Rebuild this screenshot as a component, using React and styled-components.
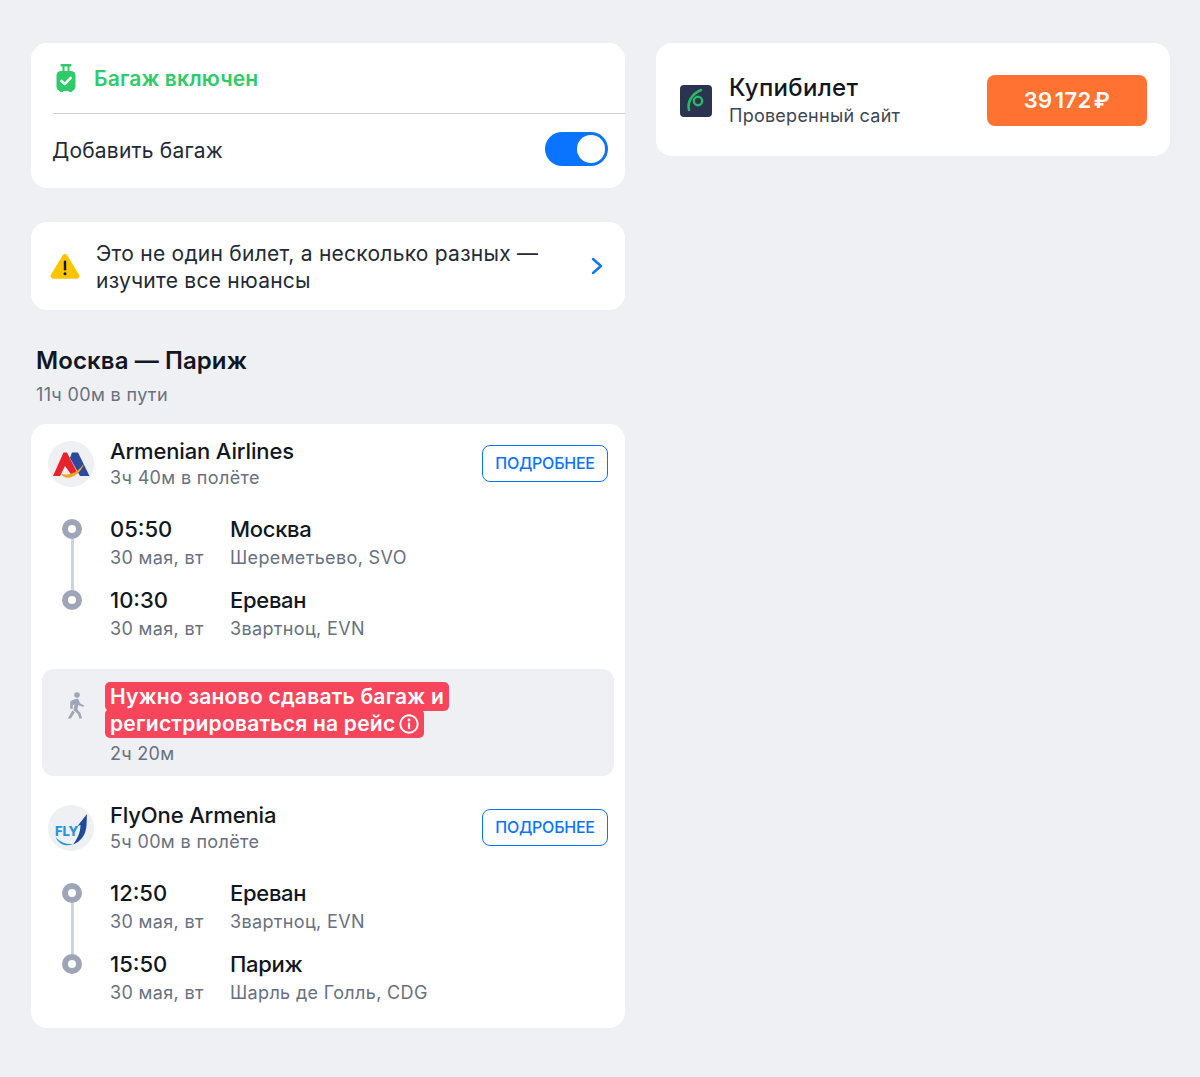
import React from 'react';
import styled, { createGlobalStyle } from 'styled-components';

const GlobalStyle = createGlobalStyle`
  html, body { margin: 0; padding: 0; }
  body {
    background: #eef0f4;
    font-family: Inter, "Noto Sans", sans-serif;
    color: #11171f;
  }
  * { box-sizing: border-box; }
`;

const Page = styled.div`
  display: grid;
  grid-template-columns: 594px 514px;
  column-gap: 31px;
  align-items: start;
  width: 1200px;
  height: 1077px;
  padding: 43px 0 0 31px;
`;

const Column = styled.div`
  display: flex;
  flex-direction: column;
`;

const Card = styled.section`
  background: #fff;
  border-radius: 16px;
`;

const BaggageCard = styled(Card)`
  height: 145px;
`;

const BaggageHead = styled.div`
  display: flex;
  align-items: center;
  gap: 17px;
  height: 71px;
  margin-left: 22px;
  padding: 0 0 0 2px;
  border-bottom: 1px solid #ccd3e2;
  color: #2ecb68;
  font-size: 21px;
  font-weight: 600;
  letter-spacing: 0.15px;
`;

const BaggageRow = styled.div`
  display: flex;
  align-items: center;
  justify-content: space-between;
  height: 73px;
  padding: 0 17px 0 21px;
  font-size: 21px;
  letter-spacing: 0.2px;
  color: #232a35;
`;

const Toggle = styled.div`
  display: flex;
  align-items: center;
  justify-content: flex-end;
  width: 63px;
  height: 34px;
  margin-top: -4px;
  padding: 3px;
  border-radius: 17px;
  background: #0a74ff;
`;

const Knob = styled.div`
  width: 28px;
  height: 28px;
  border-radius: 50%;
  background: #fff;
`;

const NoticeCard = styled(Card)`
  display: flex;
  align-items: center;
  height: 88px;
  margin-top: 34px;
  padding: 0 22px 0 19px;
`;

const NoticeText = styled.div`
  flex: 1;
  margin-left: 16px;
  padding-top: 2px;
  font-size: 21px;
  line-height: 27px;
  letter-spacing: 0.25px;
  color: #232a35;
`;

const RouteTitle = styled.h2`
  margin: 34px 0 0 5px;
  font-size: 24px;
  line-height: 34px;
  font-weight: 600;
  letter-spacing: 0.1px;
`;

const RouteTime = styled.div`
  margin: 5px 0 17px 5px;
  font-size: 18px;
  line-height: 24px;
  letter-spacing: 0.35px;
  color: #677180;
`;

const RouteCard = styled(Card)`
  padding: 17px 11px 24px;
  height: 604px;
`;

const Segment = styled.div`
  padding: 0 6px;
`;

const SegmentHead = styled.div`
  display: flex;
  align-items: center;
  height: 46px;
`;

const Avatar = styled.div`
  flex: none;
  width: 46px;
  height: 46px;
  border-radius: 50%;
  background: #eef0f4;

  svg { display: block; }
`;

const CarrierText = styled.div`
  flex: 1;
  margin-left: 16px;
`;

const CarrierName = styled.div`
  font-size: 22px;
  line-height: 24px;
  font-weight: 500;
  letter-spacing: -0.15px;
`;

const CarrierTime = styled.div`
  margin-top: 3px;
  font-size: 18px;
  line-height: 24px;
  letter-spacing: 0.35px;
  color: #677180;
`;

const MoreButton = styled.button`
  width: 126px;
  height: 37px;
  margin-top: -2px;
  padding: 0;
  background: #fff;
  border: 1px solid #0a74ff;
  border-radius: 8px;
  color: #0a74ff;
  font-family: inherit;
  font-size: 16px;
  font-weight: 500;
  letter-spacing: -0.25px;
`;

const Stops = styled.div`
  margin-top: 30px;
`;

const Stop = styled.div`
  position: relative;
  display: grid;
  grid-template-columns: 120px 1fr;
  height: ${p => (p.$last ? 52 : 71)}px;
  padding-left: 62px;

  &::before {
    content: '';
    position: absolute;
    left: 14px;
    top: 2px;
    box-sizing: border-box;
    width: 20px;
    height: 20px;
    border: 6px solid #9da5b6;
    border-radius: 50%;
    background: #fff;
  }

  ${p => !p.$last && `
    &::after {
      content: '';
      position: absolute;
      left: 22.5px;
      top: 22px;
      width: 3px;
      height: 51px;
      background: #ccd3e2;
    }
  `}
`;

const Main = styled.div`
  font-size: 22px;
  line-height: 24px;
  font-weight: 500;
`;

const City = styled(Main)`
  letter-spacing: -0.3px;
`;

const Sub = styled.div`
  margin-top: 5px;
  font-size: 18px;
  line-height: 24px;
  letter-spacing: 0.35px;
  color: #677180;
`;

const Transfer = styled.div`
  display: flex;
  height: 107px;
  margin: 29px 0;
  padding: 14px 12px 0 24px;
  background: #eef0f4;
  border-radius: 12px;
`;

const WalkIcon = styled.div`
  flex: none;
  width: 44px;
  padding: 9px 0 0 1px;
`;

const TransferBody = styled.div`
  font-size: 21px;
  line-height: 27px;
  font-weight: 600;
  letter-spacing: 0.23px;
`;

const Mark = styled.span`
  margin-left: -5px;
  padding: 2px 5px;
  background: #f7465c;
  color: #fff;
  border-radius: 5px;
  -webkit-box-decoration-break: clone;
  box-decoration-break: clone;

  svg { vertical-align: -3px; margin-left: 4px; }
`;

const TransferTime = styled.div`
  margin-top: 5px;
  font-size: 18px;
  line-height: 24px;
  font-weight: 400;
  letter-spacing: 0.3px;
  color: #677180;
`;

const SiteCard = styled(Card)`
  display: flex;
  align-items: center;
  height: 113px;
  padding: 2px 23px 0 24px;
`;

const SiteText = styled.div`
  flex: 1;
  margin-left: 17px;
`;

const SiteName = styled.div`
  font-size: 24px;
  line-height: 28px;
  font-weight: 500;
  letter-spacing: 0.3px;
`;

const SiteNote = styled.div`
  margin-top: 2px;
  font-size: 18px;
  line-height: 24px;
  letter-spacing: 0.25px;
  color: #3e4653;
`;

const BuyButton = styled.button`
  width: 160px;
  height: 51px;
  padding: 0 0 2px;
  border: 0;
  border-radius: 8px;
  background: #ff7231;
  color: #fff;
  font-family: inherit;
  font-size: 22px;
  font-weight: 600;
  letter-spacing: 0.4px;
`;

const SuitcaseIcon = () => (
  <svg width="22" height="31" viewBox="0 0 22 31">
    <rect x="5.500" y="1" width="11" height="2.400" rx="0.800" fill="#2ecb68" />
    <rect x="7.500" y="3" width="2" height="6" fill="#2ecb68" />
    <rect x="12.500" y="3" width="2" height="6" fill="#2ecb68" />
    <rect x="4.500" y="26" width="4" height="3" rx="1.200" fill="#2ecb68" />
    <rect x="13.500" y="26" width="4" height="3" rx="1.200" fill="#2ecb68" />
    <rect x="1.500" y="8" width="19" height="20" rx="4.500" fill="#2ecb68" />
    <path d="M6.500 18l3.200 3.200 6-6.400" fill="none" stroke="#fff" strokeWidth="2.600" strokeLinecap="round" strokeLinejoin="round" />
  </svg>
);

const WarningIcon = () => (
  <svg width="30" height="26" viewBox="0 0 30 26">
    <path d="M12.700 2.300a2.700 2.700 0 0 1 4.600 0l11.800 19.400a2.700 2.700 0 0 1-2.300 4H3.200a2.700 2.700 0 0 1-2.300-4z" fill="#fdc400" />
    <rect x="13.800" y="7.500" width="2.400" height="10" rx="1.200" fill="#11171f" />
    <circle cx="15" cy="20.700" r="1.500" fill="#11171f" />
  </svg>
);

const ChevronIcon = () => (
  <svg width="12" height="18" viewBox="0 0 12 18">
    <path d="M2 2l8 7-8 7" fill="none" stroke="#0a74ff" strokeWidth="2.400" strokeLinecap="round" strokeLinejoin="round" />
  </svg>
);

const ArmenianLogo = () => (
  <svg width="46" height="46" viewBox="0 0 46 46">
    <path d="M24 11.500h6L41.500 35H32L22 17z" fill="#2b4a9e" />
    <path d="M5 35L15.500 11.500h3.500L29.500 32l-6 2-6.500-9-5 10z" fill="#e8232e" />
    <path d="M12.500 32.500c9 3.500 18-2 23.500-10-2.500 8.500-11 15.500-18 14-2.200-.5-4.200-2.200-5.500-4z" fill="#f5a623" />
  </svg>
);

const FlyLogo = () => (
  <svg width="46" height="46" viewBox="0 0 46 46">
    <text x="7" y="30.500" fontFamily="Inter, sans-serif" fontWeight="800" fontSize="13" fill="#2496d8">FLY</text>
    <path d="M39 9l-.5 11c-.5 10-6 17-13.500 19.500 4-5 7.500-12 7.500-19.500l-3 1z" fill="#1f4a9b" />
    <path d="M7.500 32c5 6 12 7.500 17.500 7-6 3-14 1-17.500-7z" fill="#2496d8" />
  </svg>
);

const KupibiletLogo = () => (
  <svg width="32" height="32" viewBox="0 0 32 32">
    <rect width="32" height="32" rx="4" fill="#2a3450" />
    <path d="M9 25c-2-8 3-16 12-20" fill="none" stroke="#2bb765" strokeWidth="2.600" strokeLinecap="round" />
    <circle cx="18" cy="16" r="4.200" fill="none" stroke="#2bb765" strokeWidth="2.400" />
  </svg>
);

const PersonWalking = () => (
  <svg width="18" height="27" viewBox="0 0 18 27" fill="#9da5b6">
    <circle cx="10" cy="3" r="2.800" />
    <path d="M5.500 8l5.500-1.500 2.200 5 4 2-.8 1.500-5-2-1 4.500 3.100 3.500 1.500 5.500h-2.600l-1.400-4.500-4.500-3.800 1-6-1.700 1v3.500H3.200V9.500z" />
    <path d="M5.400 18.500l2.400 2.100-4 5.900H.8z" />
  </svg>
);

const InfoIcon = () => (
  <svg width="20" height="20" viewBox="0 0 20 20">
    <circle cx="10" cy="10" r="8.700" fill="none" stroke="#fff" strokeWidth="2" />
    <circle cx="10" cy="6" r="1.400" fill="#fff" />
    <rect x="8.900" y="8.500" width="2.200" height="6.500" rx="1" fill="#fff" />
  </svg>
);

const FlightSegment = ({ logo, name, duration, stops }) => (
  <Segment>
    <SegmentHead>
      <Avatar>{logo}</Avatar>
      <CarrierText>
        <CarrierName>{name}</CarrierName>
        <CarrierTime>{duration}</CarrierTime>
      </CarrierText>
      <MoreButton>ПОДРОБНЕЕ</MoreButton>
    </SegmentHead>
    <Stops>
      {stops.map((s, i) => (
        <Stop key={s.time} $last={i === stops.length - 1}>
          <div>
            <Main>{s.time}</Main>
            <Sub>{s.date}</Sub>
          </div>
          <div>
            <City>{s.city}</City>
            <Sub>{s.airport}</Sub>
          </div>
        </Stop>
      ))}
    </Stops>
  </Segment>
);

export default function App() {
  return (
    <>
      <GlobalStyle />
      <Page>
        <Column>
          <BaggageCard>
            <BaggageHead>
              <SuitcaseIcon />
              Багаж включен
            </BaggageHead>
            <BaggageRow>
              Добавить багаж
              <Toggle><Knob /></Toggle>
            </BaggageRow>
          </BaggageCard>

          <NoticeCard>
            <WarningIcon />
            <NoticeText>
              Это не один билет, а несколько разных —<br />
              изучите все нюансы
            </NoticeText>
            <ChevronIcon />
          </NoticeCard>

          <RouteTitle>Москва — Париж</RouteTitle>
          <RouteTime>11ч 00м в пути</RouteTime>

          <RouteCard>
            <FlightSegment
              logo={<ArmenianLogo />}
              name="Armenian Airlines"
              duration="3ч 40м в полёте"
              stops={[
                { time: '05:50', date: '30 мая, вт', city: 'Москва', airport: 'Шереметьево, SVO' },
                { time: '10:30', date: '30 мая, вт', city: 'Ереван', airport: 'Звартноц, EVN' },
              ]}
            />
            <Transfer>
              <WalkIcon><PersonWalking /></WalkIcon>
              <TransferBody>
                <Mark>
                  Нужно заново сдавать багаж и<br />
                  регистрироваться на рейс<InfoIcon />
                </Mark>
                <TransferTime>2ч 20м</TransferTime>
              </TransferBody>
            </Transfer>
            <FlightSegment
              logo={<FlyLogo />}
              name="FlyOne Armenia"
              duration="5ч 00м в полёте"
              stops={[
                { time: '12:50', date: '30 мая, вт', city: 'Ереван', airport: 'Звартноц, EVN' },
                { time: '15:50', date: '30 мая, вт', city: 'Париж', airport: 'Шарль де Голль, CDG' },
              ]}
            />
          </RouteCard>
        </Column>

        <SiteCard>
          <KupibiletLogo />
          <SiteText>
            <SiteName>Купибилет</SiteName>
            <SiteNote>Проверенный сайт</SiteNote>
          </SiteText>
          <BuyButton>{'39\u200A172\u200A₽'}</BuyButton>
        </SiteCard>
      </Page>
    </>
  );
}
